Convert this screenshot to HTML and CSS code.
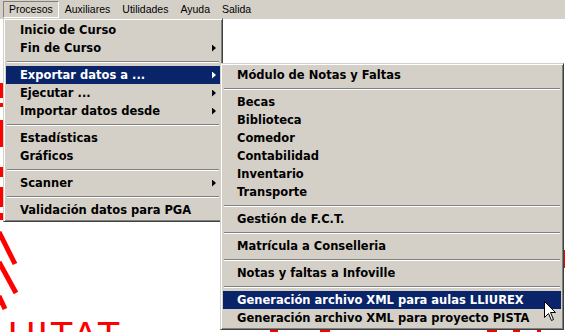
FILE: index.html
```html
<!DOCTYPE html>
<html lang="es">
<head>
  <meta charset="UTF-8">
  <title>Procesos</title>
  <link rel="stylesheet" href="styles.css">
</head>
<body>

  <!-- Menu bar -->
  <nav class="menubar">
    <span class="menubar-item open">Procesos</span>
    <span class="menubar-item">Auxiliares</span>
    <span class="menubar-item">Utilidades</span>
    <span class="menubar-item">Ayuda</span>
    <span class="menubar-item">Salida</span>
  </nav>

  <!-- Desktop with logo and open menus -->
  <div class="desktop">
    <svg class="logo" width="565" height="313" viewBox="0 0 565 313">
      <g fill="#ff0000">
        <rect x="0" y="64" width="3" height="15"/>
        <rect x="0" y="84" width="3" height="4"/>
        <rect x="0" y="101" width="4" height="27"/>
        <rect x="0" y="148" width="3" height="10"/>
        <rect x="0" y="168" width="4" height="20"/>
        <rect x="0" y="194" width="3" height="7"/>
        <rect x="563" y="231" width="2" height="18"/>
        <rect x="270" y="311" width="8" height="2"/>
        <rect x="320" y="311" width="10" height="2"/>
        <rect x="487" y="311" width="10" height="2"/>
        <rect x="513" y="311" width="7" height="2"/>
        <rect x="537" y="311" width="4" height="2"/>
      </g>
      <g stroke="#ff0000" stroke-width="5">
        <line x1="-1" y1="213" x2="15" y2="245"/>
        <line x1="-1" y1="243" x2="16" y2="274"/>
        <line x1="-1" y1="277" x2="5" y2="290"/>
      </g>
      <text class="logo-text" x="8" y="330">UITAT</text>
    </svg>

    <ul class="menu main-menu">
      <li class="item">Inicio de Curso</li>
      <li class="item sub">Fin de Curso</li>
      <li class="sep"></li>
      <li class="item sub active">Exportar datos a ...</li>
      <li class="item sub">Ejecutar ...</li>
      <li class="item sub">Importar datos desde</li>
      <li class="sep"></li>
      <li class="item">Estadísticas</li>
      <li class="item">Gráficos</li>
      <li class="sep"></li>
      <li class="item sub">Scanner</li>
      <li class="sep"></li>
      <li class="item">Validación datos para PGA</li>
    </ul>

    <ul class="menu sub-menu">
      <li class="item">Módulo de Notas y Faltas</li>
      <li class="sep"></li>
      <li class="item">Becas</li>
      <li class="item">Biblioteca</li>
      <li class="item">Comedor</li>
      <li class="item">Contabilidad</li>
      <li class="item">Inventario</li>
      <li class="item">Transporte</li>
      <li class="sep"></li>
      <li class="item">Gestión de F.C.T.</li>
      <li class="sep"></li>
      <li class="item">Matrícula a Conselleria</li>
      <li class="sep"></li>
      <li class="item">Notas y faltas a Infoville</li>
      <li class="sep"></li>
      <li class="item active">Generación archivo XML para aulas LLIUREX</li>
      <li class="item">Generación archivo XML para proyecto PISTA</li>
    </ul>

    <!-- Mouse pointer -->
    <svg class="pointer" width="13" height="21" viewBox="0 0 13 21">
      <path d="M0.5 0.5 L0.5 16.5 L4.5 12.5 L7.5 19.5 L9.5 18.5 L6.5 11.5 L11.5 11.5 Z" fill="#ffffff" stroke="#000000" stroke-width="1"/>
    </svg>
  </div>

</body>
</html>
```

FILE: styles.css
```css
body {
  margin: 0;
  width: 565px;
  height: 332px;
  overflow: hidden;
  background-color: #ffffff;
  font-family: "Liberation Sans", Arial, sans-serif;
}

/* Menu bar */
.menubar {
  display: flex;
  height: 19px;
  padding: 1px 0 0 3px;
  box-sizing: border-box;
  background-color: #d4d0c8;
  font-size: 10.5px;
  color: #000000;
}

.menubar-item {
  height: 17px;
  line-height: 15px;
  padding: 0 5px;
  border: 1px solid transparent;
  box-sizing: border-box;
}

.menubar-item.open {
  border-color: #808080 #ffffff #ffffff #808080;
}

/* Desktop area */
.desktop {
  position: relative;
  height: 313px;
}

.logo {
  display: block;
}

.logo-text {
  font-family: "Liberation Sans", Arial, sans-serif;
  font-size: 38px;
  fill: #ff0000;
  letter-spacing: 2px;
}

/* Drop-down menus */
.menu {
  position: absolute;
  margin: 0;
  padding: 2px;
  list-style: none;
  box-sizing: border-box;
  background-color: #d4d0c8;
  border: 1px solid;
  border-color: #d4d0c8 #404040 #404040 #d4d0c8;
  box-shadow: inset 1px 1px #ffffff, inset -1px -1px #808080;
  font-family: "DejaVu Sans", Verdana, sans-serif;
  font-weight: bold;
  font-size: 11.5px;
  color: #000000;
}

.main-menu {
  left: 3px;
  top: -1px;
  width: 220px;
}

.sub-menu {
  left: 220px;
  top: 44px;
  width: 344px;
}

.item {
  display: flex;
  align-items: center;
  justify-content: space-between;
  height: 18px;
  padding: 0 4px 0 14px;
  white-space: nowrap;
}

.item.sub::after {
  content: "";
  width: 4px;
  height: 7px;
  background-color: currentColor;
  clip-path: polygon(0 0, 100% 50%, 0 100%);
}

.item.active {
  background-color: #0a246a;
  color: #ffffff;
}

.sep {
  height: 9px;
  box-sizing: border-box;
  padding: 4px 1px 0;
}

.sep::before {
  content: "";
  display: block;
  border-top: 1px solid #808080;
  border-bottom: 1px solid #ffffff;
}

/* Mouse pointer */
.pointer {
  position: absolute;
  left: 544px;
  top: 282px;
}
```
